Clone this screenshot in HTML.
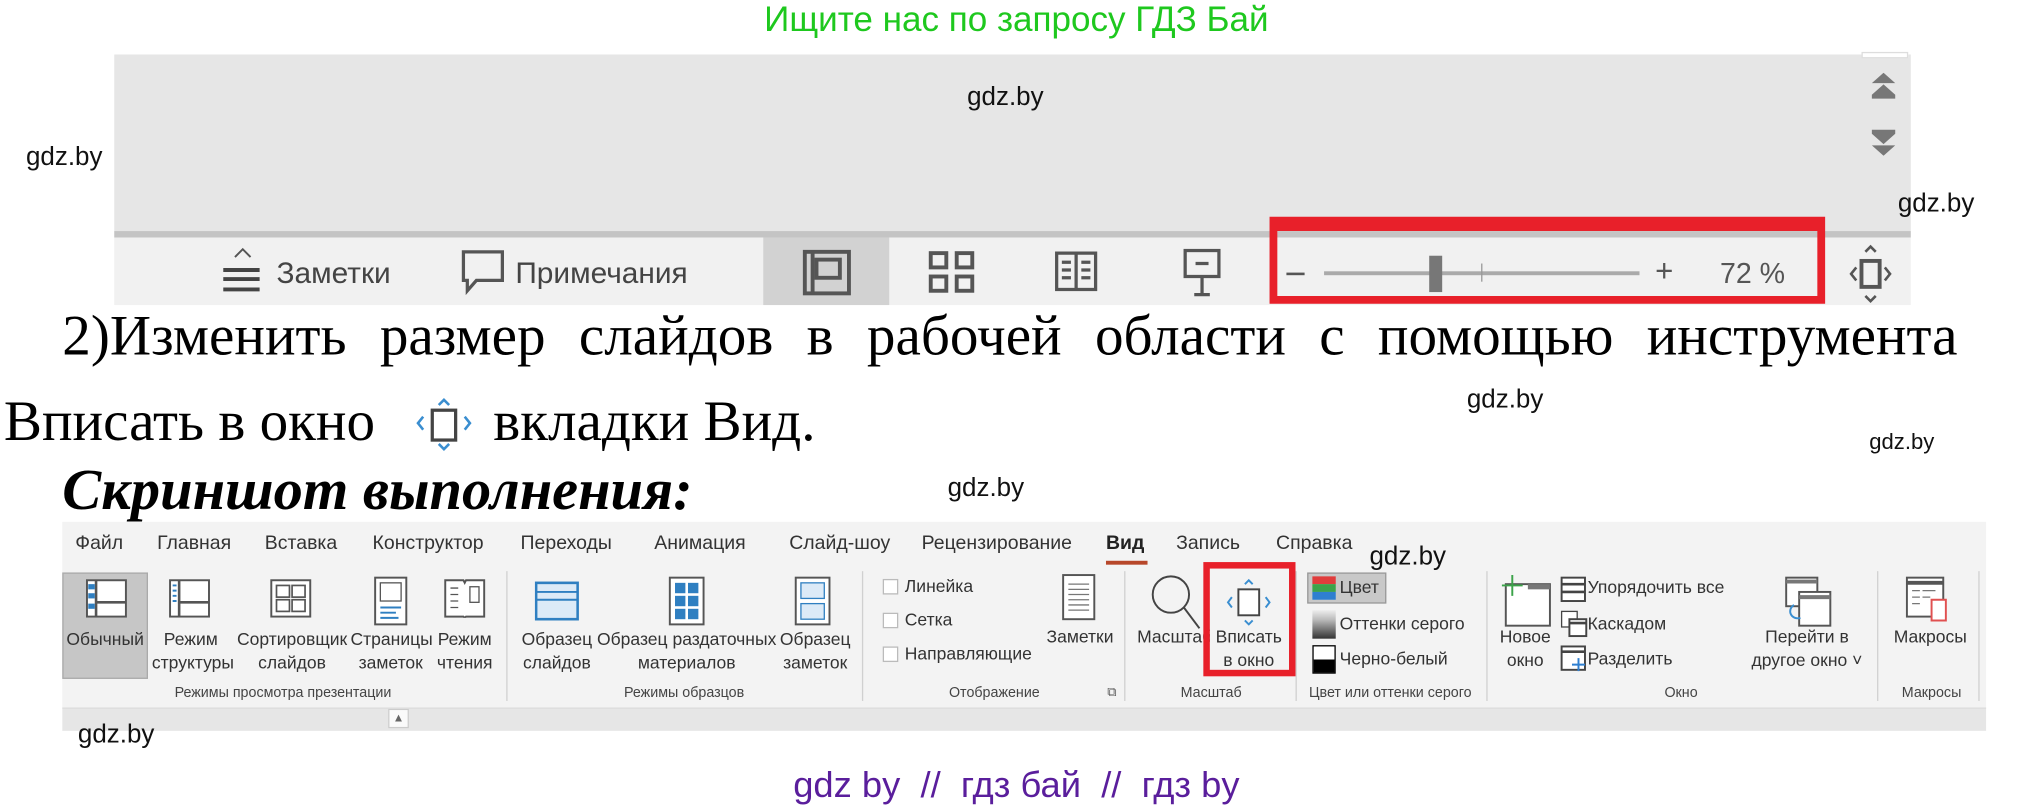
<!DOCTYPE html>
<html><head><meta charset="utf-8"><style>
*{margin:0;padding:0;box-sizing:border-box}
html,body{width:2025px;height:804px;overflow:hidden;background:#fff}
#w{position:absolute;left:0;top:0;width:1560px;height:620px;transform:scale(1.2981);transform-origin:0 0;font-family:"Liberation Sans","DejaVu Sans",sans-serif}
.a{position:absolute;white-space:nowrap}
.g{font-size:20px;color:#111}
.sb{font-size:23px;color:#444}
.t{font-size:15px;color:#333;top:410px}
.l{font-size:13.5px;color:#333;text-align:center;line-height:18px}
.gl{font-size:11px;color:#444;top:528px}
.sep{position:absolute;top:440px;height:100px;width:1px;background:#d0d0d0}
.serif{font-family:"Liberation Serif","DejaVu Serif",serif;color:#000}
</style></head><body><div id="w">
<div class="a" style="left:0;width:1566px;text-align:center;top:0px;font-size:27px;color:#1ec81e;">Ищите нас по запросу ГДЗ Бай</div>
<div class="a" style="left:88px;top:42px;width:1384px;height:136px;background:#e6e6e6"></div>
<div class="a" style="left:1434px;top:40px;width:36px;height:5px;background:#fff;border:1px solid #ddd"></div>
<svg class="a" style="left:1440px;top:56px" width="22" height="64"><path d="M2 8 L11 0 L20 8Z M2 17 L11 9 L20 17Z M2 17h18v3H2z" fill="#777"/><path d="M2 44h18v3H2z M2 47 L11 55 L20 47Z M2 56 L11 64 L20 56Z" fill="#777"/></svg>
<div class="a" style="left:88px;top:178px;width:1384px;height:5px;background:#c4c4c4"></div>
<div class="a" style="left:88px;top:183px;width:1384px;height:52px;background:#f1f1f1"></div>
<div class="a" style="left:588px;top:183px;width:97px;height:52px;background:#d2d2d2"></div>
<div class="a g" style="left:745px;top:64px">gdz.by</div>
<div class="a g" style="left:20px;top:110px">gdz.by</div>
<div class="a g" style="left:1462px;top:146px">gdz.by</div>
<svg class="a" style="left:170px;top:190px" width="34" height="40"><path d="M11 8 L17 2 L23 8" stroke="#555" fill="none" stroke-width="1.5"/><path d="M2 18h28M2 25h28M2 33h28" stroke="#444" stroke-width="3"/></svg>
<div class="a sb" style="left:213px;top:197px">Заметки</div>
<svg class="a" style="left:355px;top:192px" width="36" height="36"><path d="M2 2h30v22H12l-7 8v-8H2z" stroke="#555" stroke-width="2.5" fill="none"/></svg>
<div class="a sb" style="left:397px;top:197px">Примечания</div>
<svg class="a" style="left:618px;top:192px" width="38" height="36"><rect x="2" y="2" width="34" height="32" fill="none" stroke="#555" stroke-width="3"/><rect x="11" y="8" width="18" height="14" fill="none" stroke="#555" stroke-width="3"/><path d="M8 2v32" stroke="#555" stroke-width="3"/></svg>
<svg class="a" style="left:715px;top:193px" width="36" height="34"><g fill="none" stroke="#555" stroke-width="3"><rect x="2" y="2" width="12" height="11"/><rect x="22" y="2" width="12" height="11"/><rect x="2" y="20" width="12" height="11"/><rect x="22" y="20" width="12" height="11"/></g></svg>
<svg class="a" style="left:812px;top:192px" width="36" height="36"><g fill="none" stroke="#555" stroke-width="2.5"><rect x="2" y="3" width="30" height="28"/><path d="M17 3v28M6 10h7M6 16h7M6 22h7M21 10h7M21 16h7M21 22h7"/></g></svg>
<svg class="a" style="left:910px;top:190px" width="32" height="40"><g fill="none" stroke="#555" stroke-width="2.5"><rect x="3" y="3" width="26" height="20"/><path d="M11 13h10M16 23v14M10 37h12"/></g></svg>
<div class="a" style="left:978px;top:167px;width:428px;height:67px;border:6px solid #e8202a;border-top-width:11px"></div>
<div class="a" style="left:991px;top:210px;width:14px;height:2px;background:#555"></div>
<div class="a" style="left:1020px;top:209px;width:243px;height:3px;background:#aaa"></div>
<div class="a" style="left:1101px;top:197px;width:10px;height:28px;background:#777"></div>
<div class="a" style="left:1141px;top:203px;width:1px;height:14px;background:#999"></div>
<div class="a" style="left:1275px;top:196px;font-size:24px;color:#555">+</div>
<div class="a" style="left:1325px;top:198px;font-size:22px;color:#555">72 %</div>
<svg class="a" style="left:1423px;top:188px" width="36" height="46"><g fill="none" stroke="#555" stroke-width="2"><rect x="11" y="13" width="14" height="20" stroke-width="3"/><path d="M14 6l4-4 4 4M14 40l4 4 4-4M7 18l-4 5 4 5M29 18l4 5-4 5"/></g></svg>

<div class="a serif" style="left:48px;top:233px;width:1460px;font-size:44px;text-align:justify;text-align-last:justify;">2)Изменить размер слайдов в рабочей области с помощью инструмента</div>
<div class="a serif" style="left:3px;top:299px;font-size:44px">Вписать в окно</div>
<svg class="a" style="left:318px;top:305px" width="48" height="44"><g fill="none" stroke="#3a8ed0" stroke-width="2"><path d="M20 7l4-4 4 4M20 37l4 4 4-4M8 16l-4 5 4 5M40 16l4 5-4 5"/></g><rect x="15" y="11" width="18" height="23" fill="#fff" stroke="#444" stroke-width="2.5"/></svg>
<div class="a serif" style="left:380px;top:299px;font-size:44px">вкладки Вид.</div>
<div class="a g" style="left:1130px;top:297px">gdz.by</div>
<div class="a" style="left:1440px;top:331px;font-size:17px;color:#111">gdz.by</div>
<div class="a g" style="left:730px;top:365px">gdz.by</div>
<div class="a serif" style="left:48px;top:351px;font-size:45px;font-weight:bold;font-style:italic">Скриншот выполнения:</div>

<div class="a" style="left:48px;top:402px;width:1482px;height:143px;background:#f3f3f3"></div>
<div class="a" style="left:48px;top:545px;width:1482px;height:18px;background:#e6e6e6;border-top:1px solid #dcdcdc"></div>
<div class="a" style="left:299px;top:546px;width:16px;height:15px;background:#fafafa;border:1px solid #ccc;font-size:9px;color:#666;text-align:center;line-height:13px">▲</div>
<div class="a t" style="left:58px">Файл</div>
<div class="a t" style="left:121px">Главная</div>
<div class="a t" style="left:204px">Вставка</div>
<div class="a t" style="left:287px">Конструктор</div>
<div class="a t" style="left:401px">Переходы</div>
<div class="a t" style="left:504px">Анимация</div>
<div class="a t" style="left:608px">Слайд-шоу</div>
<div class="a t" style="left:710px">Рецензирование</div>
<div class="a t" style="left:852px;font-weight:bold;color:#222">Вид</div>
<div class="a" style="left:852px;top:432px;width:32px;height:3px;background:#b7472a"></div>
<div class="a t" style="left:906px">Запись</div>
<div class="a t" style="left:983px">Справка</div>
<div class="a g" style="left:1055px;top:418px">gdz.by</div>

<div class="a" style="left:48px;top:441px;width:66px;height:82px;background:#c6c6c6;border:1px solid #aaa"></div>
<svg class="a" style="left:66px;top:446px" width="32" height="30"><rect x="1" y="1" width="30" height="28" fill="#fff" stroke="#555" stroke-width="1.5"/><path d="M8 1v28M8 18h23" stroke="#555" stroke-width="2"/><rect x="2" y="4" width="5" height="4" fill="#2f7fc1"/><rect x="2" y="11" width="5" height="4" fill="#2f7fc1"/><rect x="2" y="19" width="5" height="4" fill="#2f7fc1"/></svg>
<div class="a l" style="left:48px;top:484px;width:66px">Обычный</div>
<svg class="a" style="left:130px;top:446px" width="32" height="30"><rect x="1" y="1" width="30" height="28" fill="#fff" stroke="#555" stroke-width="1.5"/><path d="M8 1v28M8 18h23" stroke="#555" stroke-width="2"/><path d="M3 5h3M3 9h3M3 13h3M3 17h3" stroke="#2f7fc1" stroke-width="1.5"/></svg>
<div class="a l" style="left:117px;top:484px;width:60px">Режим<br>структуры</div>
<svg class="a" style="left:208px;top:446px" width="32" height="30"><rect x="1" y="1" width="30" height="28" fill="#fff" stroke="#555" stroke-width="1.5"/><g fill="none" stroke="#555" stroke-width="1.3"><rect x="5" y="5" width="10" height="9"/><rect x="17" y="5" width="10" height="9"/><rect x="5" y="16" width="10" height="9"/><rect x="17" y="16" width="10" height="9"/></g></svg>
<div class="a l" style="left:180px;top:484px;width:90px">Сортировщик<br>слайдов</div>
<svg class="a" style="left:288px;top:444px" width="26" height="38"><rect x="1" y="1" width="24" height="36" fill="#fff" stroke="#555" stroke-width="1.5"/><rect x="5" y="5" width="16" height="14" fill="none" stroke="#555"/><path d="M5 24h16M5 28h12M5 32h14" stroke="#2f7fc1" stroke-width="1.5"/></svg>
<div class="a l" style="left:270px;top:484px;width:62px">Страницы<br>заметок</div>
<svg class="a" style="left:342px;top:446px" width="32" height="30"><path d="M1 1h14l1 2 1-2h14v28H17l-1 1-1-1H1z" fill="#fff" stroke="#555" stroke-width="1.5"/><path d="M5 7h6M5 12h6M5 17h6M5 22h6" stroke="#555"/><rect x="20" y="6" width="7" height="12" fill="none" stroke="#555"/></svg>
<div class="a l" style="left:334px;top:484px;width:48px">Режим<br>чтения</div>
<div class="a gl" style="left:48px;width:340px;text-align:center">Режимы просмотра презентации</div>
<div class="sep" style="left:390px"></div>

<svg class="a" style="left:412px;top:448px" width="34" height="30"><rect x="1" y="1" width="32" height="28" fill="#dceaf7" stroke="#2f7fc1" stroke-width="2"/><path d="M1 8h32M1 14h32" stroke="#2f7fc1" stroke-width="1.5"/></svg>
<div class="a l" style="left:397px;top:484px;width:64px">Образец<br>слайдов</div>
<svg class="a" style="left:515px;top:444px" width="28" height="38"><rect x="1" y="1" width="26" height="36" fill="#fff" stroke="#555" stroke-width="1.5"/><g fill="#2f7fc1"><rect x="5" y="5" width="8" height="8"/><rect x="15" y="5" width="8" height="8"/><rect x="5" y="15" width="8" height="8"/><rect x="15" y="15" width="8" height="8"/><rect x="5" y="25" width="8" height="8"/><rect x="15" y="25" width="8" height="8"/></g></svg>
<div class="a l" style="left:458px;top:484px;width:142px">Образец раздаточных<br>материалов</div>
<svg class="a" style="left:612px;top:444px" width="28" height="38"><rect x="1" y="1" width="26" height="36" fill="#fff" stroke="#555" stroke-width="1.5"/><rect x="5" y="5" width="18" height="12" fill="#dceaf7" stroke="#2f7fc1"/><rect x="5" y="21" width="18" height="12" fill="#dceaf7" stroke="#2f7fc1"/></svg>
<div class="a l" style="left:596px;top:484px;width:64px">Образец<br>заметок</div>
<div class="a gl" style="left:392px;width:270px;text-align:center">Режимы образцов</div>
<div class="sep" style="left:664px"></div>

<div class="a" style="left:680px;top:446px;width:12px;height:12px;border:1px solid #bbb;background:#fff"></div>
<div class="a l" style="left:697px;top:443px;text-align:left">Линейка</div>
<div class="a" style="left:680px;top:472px;width:12px;height:12px;border:1px solid #bbb;background:#fff"></div>
<div class="a l" style="left:697px;top:469px;text-align:left">Сетка</div>
<div class="a" style="left:680px;top:498px;width:12px;height:12px;border:1px solid #bbb;background:#fff"></div>
<div class="a l" style="left:697px;top:495px;text-align:left">Направляющие</div>
<svg class="a" style="left:818px;top:442px" width="26" height="36"><rect x="1" y="1" width="24" height="34" fill="#fff" stroke="#555" stroke-width="1.5"/><path d="M5 8h16M5 12h16M5 16h16M5 20h16M5 24h16M5 28h16" stroke="#777"/></svg>
<div class="a l" style="left:806px;top:482px;width:52px">Заметки</div>
<div class="a gl" style="left:666px;width:200px;text-align:center">Отображение</div>
<div class="a" style="left:853px;top:528px;font-size:10px;color:#555">⧉</div>
<div class="sep" style="left:866px"></div>

<svg class="a" style="left:885px;top:442px" width="40" height="44"><circle cx="17" cy="16" r="14" fill="none" stroke="#444" stroke-width="1.5"/><path d="M27 26l12 16" stroke="#444" stroke-width="1.5"/></svg>
<div class="a l" style="left:876px;top:482px;text-align:left">Масштаб</div>
<svg class="a" style="left:942px;top:444px" width="40" height="40"><g fill="none" stroke="#3a8ed0" stroke-width="1.5"><path d="M17 6l3-3 3 3M17 34l3 3 3-3M7 16l-3 4 3 4M33 16l3 4-3 4"/></g><rect x="12" y="10" width="16" height="20" fill="#fff" stroke="#444" stroke-width="1.5"/></svg>
<div class="a l" style="left:932px;top:482px;width:60px;background:#f3f3f3">Вписать<br>в окно</div>
<div class="a" style="left:927px;top:433px;width:71px;height:88px;border:5px solid #e8202a"></div>
<div class="a gl" style="left:868px;width:130px;text-align:center">Масштаб</div>
<div class="sep" style="left:998px"></div>

<div class="a" style="left:1007px;top:441px;width:61px;height:24px;background:#c8c8c8;border:1px solid #999"></div>
<div class="a" style="left:1011px;top:444px;width:18px;height:6px;background:#e03c3c"></div>
<div class="a" style="left:1011px;top:450px;width:18px;height:6px;background:#3ca34a"></div>
<div class="a" style="left:1011px;top:456px;width:18px;height:6px;background:#2f7fd0"></div>
<div class="a l" style="left:1032px;top:444px">Цвет</div>
<div class="a" style="left:1011px;top:470px;width:18px;height:22px;background:linear-gradient(#eee,#bbb,#777,#333)"></div>
<div class="a l" style="left:1032px;top:472px">Оттенки серого</div>
<div class="a" style="left:1011px;top:497px;width:18px;height:22px;background:linear-gradient(#fff 50%,#000 50%);border:1px solid #000"></div>
<div class="a l" style="left:1032px;top:499px">Черно-белый</div>
<div class="a gl" style="left:998px;width:146px;text-align:center">Цвет или оттенки серого</div>
<div class="sep" style="left:1145px"></div>

<svg class="a" style="left:1155px;top:442px" width="40" height="42"><rect x="5" y="8" width="34" height="32" fill="#fff" stroke="#555" stroke-width="1.5"/><rect x="22" y="8" width="17" height="4" fill="#777"/><path d="M10 1v16M2 9h16" stroke="#3ca34a" stroke-width="1.5"/></svg>
<div class="a l" style="left:1150px;top:482px;width:50px">Новое<br>окно</div>
<svg class="a" style="left:1202px;top:444px" width="20" height="20"><rect x="1" y="1" width="18" height="18" fill="#fff" stroke="#444" stroke-width="1.5"/><path d="M1 6h18M1 12h18" stroke="#444" stroke-width="2"/></svg>
<div class="a l" style="left:1223px;top:444px">Упорядочить все</div>
<svg class="a" style="left:1202px;top:470px" width="22" height="22"><rect x="1" y="1" width="12" height="12" fill="#fff" stroke="#444"/><rect x="7" y="7" width="13" height="13" fill="#fff" stroke="#444" stroke-width="1.5"/><path d="M7 10h13" stroke="#444" stroke-width="2"/></svg>
<div class="a l" style="left:1223px;top:472px">Каскадом</div>
<svg class="a" style="left:1202px;top:497px" width="22" height="22"><rect x="1" y="1" width="18" height="18" fill="#fff" stroke="#444" stroke-width="1.5"/><path d="M1 5h18" stroke="#444" stroke-width="2"/><path d="M14 10v10M9 15h10" stroke="#2f7fd0" stroke-width="1.5"/></svg>
<div class="a l" style="left:1223px;top:499px">Разделить</div>
<svg class="a" style="left:1372px;top:444px" width="40" height="40"><rect x="4" y="1" width="24" height="22" fill="#fff" stroke="#555" stroke-width="1.5"/><rect x="14" y="12" width="24" height="26" fill="#fff" stroke="#555" stroke-width="1.5"/><path d="M4 4h24M14 16h24" stroke="#777" stroke-width="3"/><path d="M10 22c-6 4 -2 12 5 10" fill="none" stroke="#3a8ed0" stroke-width="1.5"/></svg>
<div class="a l" style="left:1344px;top:482px;width:96px">Перейти в<br>другое окно ˅</div>
<div class="a gl" style="left:1145px;width:300px;text-align:center">Окно</div>
<div class="sep" style="left:1446px"></div>

<svg class="a" style="left:1468px;top:444px" width="34" height="36"><rect x="1" y="1" width="28" height="30" fill="#fff" stroke="#555" stroke-width="1.5"/><path d="M1 5h28" stroke="#555" stroke-width="3"/><path d="M5 11h6M13 11h10M5 16h6M13 16h6M5 21h6" stroke="#777"/><path d="M20 18h11v16H20z" fill="#fff" stroke="#e05050" stroke-width="1.5"/></svg>
<div class="a l" style="left:1455px;top:482px;width:64px">Макросы</div>
<div class="a gl" style="left:1446px;width:84px;text-align:center">Макросы</div>
<div class="sep" style="left:1524px"></div>

<div class="a g" style="left:60px;top:555px">gdz.by</div>
<div class="a" style="left:0;width:1566px;text-align:center;top:589px;font-size:28px;color:#5a1e9c;white-space:pre">gdz by  //  гдз бай  //  гдз by</div>
</div></body></html>
